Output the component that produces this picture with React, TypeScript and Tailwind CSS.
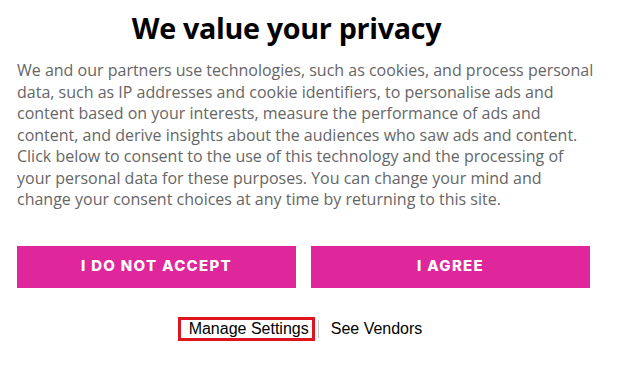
export default function App() {
  const lines = [
    'We and our partners use technologies, such as cookies, and process personal',
    'data, such as IP addresses and cookie identifiers, to personalise ads and',
    'content based on your interests, measure the performance of ads and',
    'content, and derive insights about the audiences who saw ads and content.',
    'Click below to consent to the use of this technology and the processing of',
    'your personal data for these purposes. You can change your mind and',
    'change your consent choices at any time by returning to this site.',
  ];

  return (
    <div className="w-[620px] h-[386px] bg-white overflow-hidden">
      <h1 className="pt-[8px] text-center text-[28.7px] leading-[40px] font-bold text-black tracking-[-0.3px] font-['Open_Sans',sans-serif] pr-[47px]">
        We value your privacy
      </h1>
      <p className="mt-[12px] ml-[17px] w-[596px] text-[16px] leading-[21.5px] text-[#666666] font-['Open_Sans',sans-serif]">
        {lines.map((l, i) => (
          <span key={i} className="block whitespace-nowrap">{l}</span>
        ))}
      </p>
      <div className="mt-[35px] ml-[17px] flex gap-[15px]">
        <button className="w-[279px] h-[42px] bg-[#e0269b] text-white text-[15px] font-extrabold tracking-[1.3px] font-['Inter',sans-serif]">
          I DO NOT ACCEPT
        </button>
        <button className="w-[279px] h-[42px] bg-[#e0269b] text-white text-[15px] font-extrabold tracking-[1.3px] font-['Inter',sans-serif]">
          I AGREE
        </button>
      </div>
      <div className="mt-[29px] flex items-center justify-center pr-[20px] font-['Liberation_Sans',Arial,sans-serif] text-[16px] text-black">
        <span className="border-[3px] border-[#e0141e] h-[24px] pl-[8px] pr-[3px] leading-[18px]">Manage Settings</span>
        <span className="w-px h-[18px] bg-[#c8c8c8] mx-[3px]"></span>
        <span className="ml-[9px] leading-[18px]">See Vendors</span>
      </div>
    </div>
  );
}
